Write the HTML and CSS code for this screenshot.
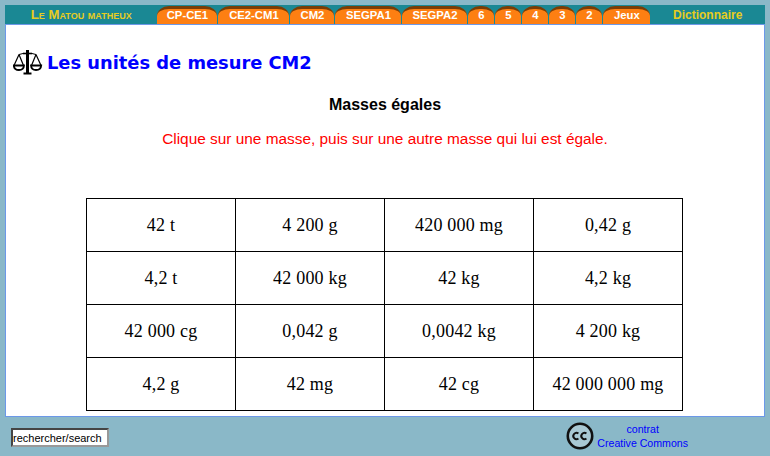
FILE: index.html
```html
<!DOCTYPE html>
<html lang="fr">
<head>
<meta charset="utf-8">
<title>Les unités de mesure CM2</title>
<link rel="stylesheet" href="styles.css">
</head>
<body>
<div class="page">
  <nav class="nav">
    <a class="brand">Le Matou matheux</a>
    <div class="tabs">
      <a class="tab t60">CP-CE1</a>
      <a class="tab t71">CE2-CM1</a>
      <a class="tab t44">CM2</a>
      <a class="tab t66">SEGPA1</a>
      <a class="tab t65">SEGPA2</a>
      <a class="tab t26">6</a>
      <a class="tab t26">5</a>
      <a class="tab t26">4</a>
      <a class="tab t26">3</a>
      <a class="tab t26">2</a>
      <a class="tab t47">Jeux</a>
    </div>
    <a class="dict">Dictionnaire</a>
  </nav>
  <main class="panel">
    <header class="title">
      <svg class="scale" width="30" height="25" viewBox="0 0 30 25" fill="none" stroke="#000">
        <path d="M14.5 0V23" stroke-width="3"/>
        <path d="M10.5 23.5H18.5" stroke-width="2"/>
        <path d="M10 3.5H19" stroke-width="1.6"/>
        <path d="M6 4.5L10 3.5M23 4.5L19 3.5" stroke-width="1"/>
        <path d="M6 4.5L1 15.5M6 4.5L10.5 15.5M23 4.5L18.5 15.5M23 4.5L28 15.5" stroke-width="1.2"/>
        <path d="M0.8 15.5H11C10.8 18.6 8.5 20 6 20C3.5 20 1 18.6 0.8 15.5Z" fill="#fff" stroke-width="1.8"/>
        <path d="M18 15.5H28.2C28 18.6 25.5 20 23 20C20.5 20 18.2 18.6 18 15.5Z" fill="#fff" stroke-width="1.8"/>
      </svg>
      <h1>Les unités de mesure CM2</h1>
    </header>
    <h2>Masses égales</h2>
    <p class="hint">Clique sur une masse, puis sur une autre masse qui lui est égale.</p>
    <table class="grid">
      <tr><td>42 t</td><td>4 200 g</td><td>420 000 mg</td><td>0,42 g</td></tr>
      <tr><td>4,2 t</td><td>42 000 kg</td><td>42 kg</td><td>4,2 kg</td></tr>
      <tr><td>42 000 cg</td><td>0,042 g</td><td>0,0042 kg</td><td>4 200 kg</td></tr>
      <tr><td>4,2 g</td><td>42 mg</td><td>42 cg</td><td>42 000 000 mg</td></tr>
    </table>
  </main>
  <footer class="foot">
    <input class="search" type="text" value="rechercher/search">
    <div class="cc">
      <svg width="28" height="28" viewBox="0 0 28 28" fill="none" stroke="#111">
        <circle cx="14" cy="14" r="12.2" stroke-width="2.6" fill="#a9c9d4"/>
        <path d="M12.4 11.6A3.1 3.1 0 1 0 12.4 16.4M20.4 11.6A3.1 3.1 0 1 0 20.4 16.4" stroke-width="2"/>
      </svg>
      <a class="contract">contrat<br>Creative Commons</a>
    </div>
  </footer>
</div>
</body>
</html>
```
FILE: styles.css
```css
* { box-sizing: border-box; }
html, body { margin: 0; padding: 0; }
body {
  width: 770px;
  height: 456px;
  overflow: hidden;
  background: #8ab8c8;
  font-family: "Liberation Sans", Arial, sans-serif;
}
.page { padding: 5px 5px 0; }
.nav {
  display: flex;
  align-items: flex-end;
  height: 19px;
  background: #1a8894;
}
.brand {
  width: 153px;
  align-self: center;
  text-align: center;
  color: #e8cc1e;
  font-size: 13.2px;
  font-weight: bold;
  font-variant: small-caps;
  white-space: nowrap;
}
.tabs { display: flex; gap: 1px; height: 18px; }
.tab {
  height: 18px;
  background: #fd7f12;
  border-top: 3px solid #7a3d06;
  border-radius: 12px 12px 0 0 / 10px 10px 0 0;
  color: #fff;
  font-size: 11.3px;
  font-weight: bold;
  line-height: 13px;
  text-align: center;
  white-space: nowrap;
}
.t60 { width: 60px; }
.t71 { width: 71px; }
.t44 { width: 44px; }
.t66 { width: 66px; }
.t65 { width: 65px; }
.t26 { width: 26px; }
.t47 { width: 47px; }
.dict {
  width: 115px;
  align-self: center;
  text-align: center;
  color: #e8cc1e;
  font-size: 12px;
  font-weight: bold;
  white-space: nowrap;
}
.panel {
  height: 393px;
  background: #fff;
  border: 1px solid #6c98e8;
  overflow: hidden;
}
.title {
  display: flex;
  align-items: center;
  gap: 4px;
  margin: 25px 0 0 7px;
  height: 25px;
}
.title h1 {
  margin: 0;
  color: #0000ff;
  font-family: "DejaVu Sans", Verdana, sans-serif;
  font-size: 17.85px;
  font-weight: bold;
  white-space: nowrap;
}
.panel h2 {
  margin: 21px 0 0;
  text-align: center;
  font-size: 16px;
  line-height: 18px;
  color: #000;
}
.hint {
  margin: 16px 0 0;
  text-align: center;
  font-size: 15.4px;
  line-height: 18px;
  color: #f00;
}
.grid {
  margin: 50px 0 0 80px;
  width: 597px;
  height: 213px;
  table-layout: fixed;
  border-collapse: collapse;
  font-family: "Liberation Serif", "Times New Roman", serif;
  font-size: 18px;
  letter-spacing: 0.2px;
  color: #000;
}
.grid td {
  width: 149px;
  height: 53px;
  border: 1px solid #000;
  text-align: center;
  padding: 0;
}
.foot {
  display: flex;
  justify-content: space-between;
  padding: 11px 77px 0 6px;
}
.search {
  width: 98px;
  height: 19px;
  padding: 0;
  border: 2px inset #999;
  background: #fff;
  color: #000;
  font-family: "Liberation Sans", Arial, sans-serif;
  font-size: 11px;
}
.cc { display: flex; gap: 3px; align-items: center; margin-top: -6px; }
.contract {
  color: #0000ff;
  font-size: 10.6px;
  line-height: 14px;
  text-align: center;
  white-space: nowrap;
}
```
